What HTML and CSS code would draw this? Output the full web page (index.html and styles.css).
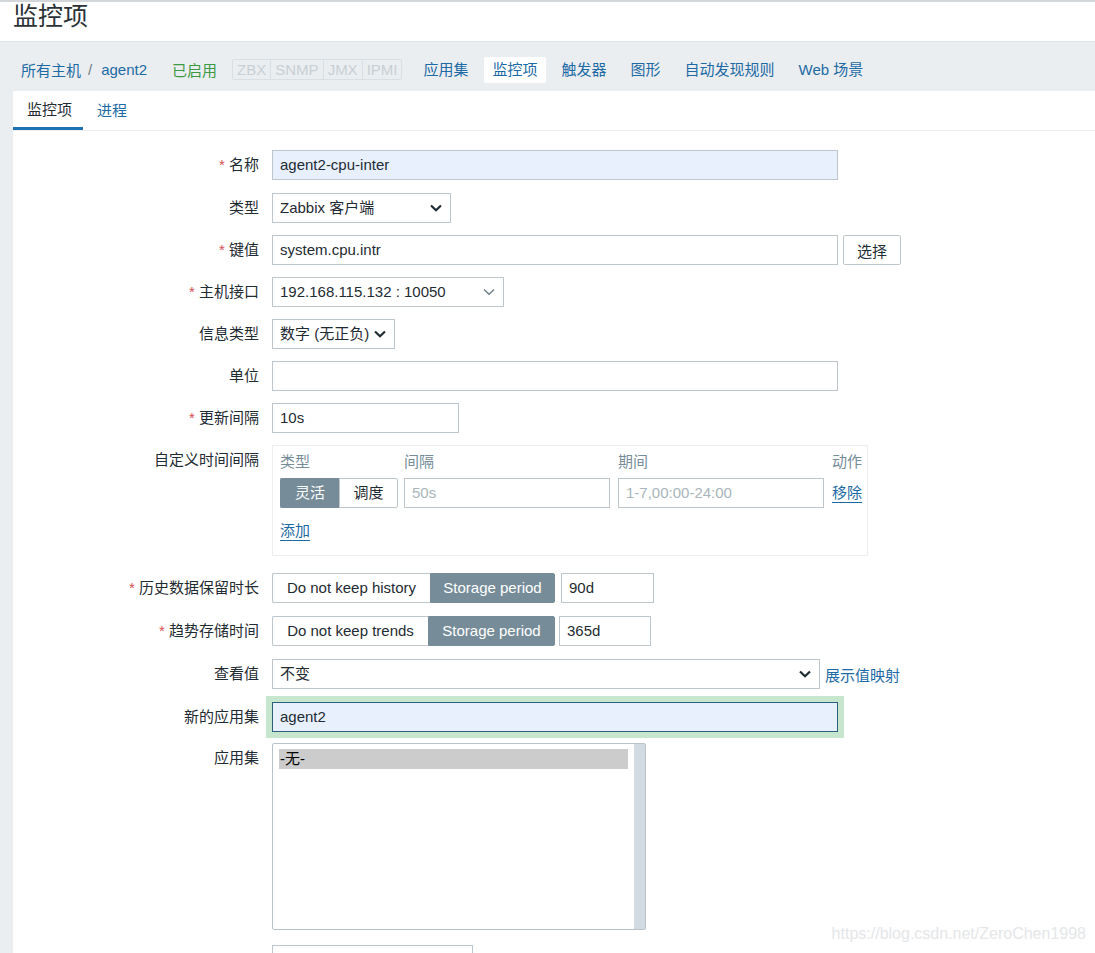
FILE: index.html
```html
<!DOCTYPE html>
<html lang="zh">
<head>
<meta charset="utf-8">
<title>监控项</title>
<link rel="stylesheet" href="styles.css">
</head>
<body>
<div class="topline"></div>
<header class="page-header"><h1 class="page-title">监控项</h1></header>
<nav class="host-bar">
  <ul class="breadcrumbs">
    <li><a class="link">所有主机</a></li>
    <li class="sep">/</li>
    <li><a class="link">agent2</a></li>
  </ul>
  <span class="status-on">已启用</span>
  <span class="avail"><span>ZBX</span><span>SNMP</span><span>JMX</span><span>IPMI</span></span>
  <ul class="host-nav">
    <li><a class="link">应用集</a></li>
    <li class="selected"><a class="link">监控项</a></li>
    <li><a class="link">触发器</a></li>
    <li><a class="link">图形</a></li>
    <li><a class="link">自动发现规则</a></li>
    <li><a class="link">Web 场景</a></li>
  </ul>
</nav>
<main class="panel">
  <div class="tabs">
    <span class="tab active">监控项</span>
    <span class="tab"><a class="link">进程</a></span>
  </div>
  <form class="form">
    <div class="row row-g13">
      <label class="lbl"><span class="req">*</span> 名称</label>
      <div class="field"><div class="input w566 autofill">agent2-cpu-inter</div></div>
    </div>
    <div class="row">
      <label class="lbl">类型</label>
      <div class="field"><div class="select w179"><span>Zabbix 客户端</span><svg class="chev" width="12" height="8" viewBox="0 0 12 8"><path d="M1 1.5 L6 6.3 L11 1.5" fill="none" stroke="#1f2c33" stroke-width="2.2"/></svg></div></div>
    </div>
    <div class="row">
      <label class="lbl"><span class="req">*</span> 键值</label>
      <div class="field"><div class="input w566">system.cpu.intr</div><button type="button" class="btn">选择</button></div>
    </div>
    <div class="row">
      <label class="lbl"><span class="req">*</span> 主机接口</label>
      <div class="field"><div class="select w232"><span>192.168.115.132 : 10050</span><svg class="chev" width="12" height="8" viewBox="0 0 12 8"><path d="M1 1.5 L6 6.3 L11 1.5" fill="none" stroke="#6f7d85" stroke-width="1.3"/></svg></div></div>
    </div>
    <div class="row">
      <label class="lbl">信息类型</label>
      <div class="field"><div class="select w123"><span>数字 (无正负)</span><svg class="chev" width="12" height="8" viewBox="0 0 12 8"><path d="M1 1.5 L6 6.3 L11 1.5" fill="none" stroke="#1f2c33" stroke-width="2.2"/></svg></div></div>
    </div>
    <div class="row">
      <label class="lbl">单位</label>
      <div class="field"><div class="input w566"></div></div>
    </div>
    <div class="row">
      <label class="lbl"><span class="req">*</span> 更新间隔</label>
      <div class="field"><div class="input w187">10s</div></div>
    </div>
    <div class="row row-custom">
      <label class="lbl">自定义时间间隔</label>
      <div class="field">
        <div class="interval-box">
          <div class="iv-grid">
            <span class="iv-head">类型</span>
            <span class="iv-head">间隔</span>
            <span class="iv-head">期间</span>
            <span class="iv-head">动作</span>
            <div class="seg seg-small"><span class="seg-btn on w59">灵活</span><span class="seg-btn w59">调度</span></div>
            <div class="input w206 placeholder">50s</div>
            <div class="input w206 placeholder">1-7,00:00-24:00</div>
            <a class="link ul">移除</a>
          </div>
          <a class="link ul add">添加</a>
        </div>
      </div>
    </div>
    <div class="row row-g13">
      <label class="lbl"><span class="req">*</span> 历史数据保留时长</label>
      <div class="field gap6"><div class="seg"><span class="seg-btn w158">Do not keep history</span><span class="seg-btn on w125">Storage period</span></div><div class="input w93">90d</div></div>
    </div>
    <div class="row row-g13">
      <label class="lbl"><span class="req">*</span> 趋势存储时间</label>
      <div class="field gap4"><div class="seg"><span class="seg-btn w156">Do not keep trends</span><span class="seg-btn on w127">Storage period</span></div><div class="input w92">365d</div></div>
    </div>
    <div class="row row-g13">
      <label class="lbl">查看值</label>
      <div class="field"><div class="select w548"><span>不变</span><svg class="chev" width="12" height="8" viewBox="0 0 12 8"><path d="M1 1.5 L6 6.3 L11 1.5" fill="none" stroke="#1f2c33" stroke-width="2.2"/></svg></div><a class="link map-link">展示值映射</a></div>
    </div>
    <div class="row row-g11">
      <label class="lbl">新的应用集</label>
      <div class="field"><div class="input w566 focused">agent2</div></div>
    </div>
    <div class="row row-g15">
      <label class="lbl">应用集</label>
      <div class="field">
        <div class="listbox">
          <div class="list-items"><div class="list-opt">-无-</div></div>
          <div class="list-track"></div>
        </div>
      </div>
    </div>
    <div class="row">
      <label class="lbl"></label>
      <div class="field"><div class="input w201"></div></div>
    </div>
  </form>
</main>
<div class="watermark">https://blog.csdn.net/ZeroChen1998</div>
</body>
</html>
```

FILE: styles.css
```css
html, body {
  margin: 0;
  padding: 0;
  height: 953px;
  overflow: hidden;
}
body {
  background: #ebeef0;
  font-family: "Liberation Sans", "Noto Sans CJK SC", sans-serif;
  font-size: 15px;
  color: #1f2c33;
  position: relative;
}
.topline {
  height: 2px;
  background: #d3d7da;
}
.page-header {
  background: #fff;
  height: 40px;
  border-bottom: 1px solid #dfe4e7;
  box-sizing: border-box;
  padding-left: 13px;
}
.page-title {
  margin: 0;
  font-weight: normal;
  font-size: 25px;
  line-height: 29px;
  color: #2b3237;
}
.host-bar {
  display: flex;
  align-items: center;
  height: 49px;
  box-sizing: border-box;
  padding: 14px 0 8px 21px;
  background: #ebeef0;
}
.breadcrumbs, .host-nav {
  list-style: none;
  margin: 0;
  padding: 0;
  display: flex;
  align-items: center;
}
.link {
  color: #1d6aa5;
  text-decoration: none;
  cursor: pointer;
}
.breadcrumbs .sep {
  color: #6f7d85;
  margin: 0 9px 0 7px;
}
.status-on {
  color: #3c9a45;
  margin-left: 25px;
}
.avail {
  display: flex;
  margin-left: 15px;
  border: 1px solid #d9dfe3;
  border-radius: 2px;
  height: 19px;
  line-height: 19px;
  color: #c8d0d5;
}
.avail span {
  padding: 0 4px;
  border-left: 1px solid #d9dfe3;
}
.avail span:first-child { border-left: none; }
.host-nav {
  margin-left: 13px;
  gap: 8px;
}
.host-nav li {
  padding: 0 8px;
  height: 26px;
  line-height: 26px;
}
.host-nav li.selected {
  background: #fff;
  border-radius: 2px;
}
.panel {
  margin-left: 13px;
  background: #fff;
  height: 900px;
}
.tabs {
  display: flex;
  height: 40px;
  box-sizing: border-box;
  border-bottom: 1px solid #ebeef0;
}
.tab {
  padding: 0 12px 0 14px;
  line-height: 39px;
  box-sizing: border-box;
}
.tab.active {
  color: #1f2c33;
  border-bottom: 3px solid #1c72b3;
  line-height: 38px;
  padding-right: 11px;
}
.form {
  padding-top: 19px;
}
.row {
  display: flex;
  align-items: flex-start;
  margin-bottom: 12px;
}
.row-custom { margin-bottom: 17px; }
.row-g13 { margin-bottom: 13px; }
.row-g11 { margin-bottom: 11px; }
.row-g15 { margin-bottom: 15px; }
.lbl {
  width: 246px;
  flex: none;
  text-align: right;
  line-height: 30px;
  color: #1f2c33;
}
.req { color: #d64e4e; }
.field {
  margin-left: 13px;
  display: flex;
  align-items: center;
  gap: 5px;
}
.field.gap6 { gap: 6px; }
.field.gap4 { gap: 4px; }
.input, .select {
  height: 30px;
  box-sizing: border-box;
  border: 1px solid #bcc6cc;
  background: #fff;
  padding: 0 7px;
  line-height: 28px;
  white-space: nowrap;
  color: #1f2c33;
}
.select {
  display: flex;
  align-items: center;
  justify-content: space-between;
  padding-right: 8px;
}
.chev { flex: none; }
.autofill { background: #e8f0fe; }
.placeholder { color: #a9b5bb; }
.focused {
  background: #e8f0fe;
  border-color: #2d5f7f;
  box-shadow: 0 0 0 6px #c7e6ce;
}
.w566 { width: 566px; }
.w179 { width: 179px; }
.w232 { width: 232px; }
.w123 { width: 123px; }
.w187 { width: 187px; }
.w206 { width: 206px; }
.w93 { width: 93px; }
.w92 { width: 92px; }
.w548 { width: 548px; }
.w201 { width: 201px; }
.w59 { width: 59px; }
.w158 { width: 158px; }
.w156 { width: 156px; }
.w125 { width: 125px; }
.w127 { width: 127px; }
.btn {
  height: 30px;
  width: 58px;
  border: 1px solid #bcc6cc;
  border-radius: 2px;
  background: #fff;
  font: inherit;
  color: #1f2c33;
  padding: 0;
}
.seg {
  display: flex;
  height: 30px;
}
.seg-btn {
  box-sizing: border-box;
  height: 30px;
  line-height: 28px;
  text-align: center;
  border: 1px solid #bcc6cc;
  background: #fff;
  color: #1f2c33;
  white-space: nowrap;
}
.seg-btn:first-child {
  border-radius: 2px 0 0 2px;
  border-right: none;
}
.seg-btn:last-child { border-radius: 0 2px 2px 0; }
.seg-btn.on {
  background: #768d99;
  border-color: #768d99;
  color: #fff;
}
.interval-box {
  width: 596px;
  height: 111px;
  box-sizing: border-box;
  border: 1px solid #ebeef0;
  padding: 6px 0 0 7px;
}
.iv-grid {
  display: grid;
  grid-template-columns: 124px 214px 214px 1fr;
  grid-template-rows: 20px 30px;
  row-gap: 6px;
  align-items: center;
  white-space: nowrap;
}
.iv-head {
  color: #768d99;
  line-height: 20px;
}
.ul {
  border-bottom: 1px solid #1d6aa5;
  line-height: 18px;
  justify-self: start;
}
.add {
  display: inline-block;
  margin-top: 14px;
}
.listbox {
  width: 374px;
  height: 187px;
  box-sizing: border-box;
  border: 1px solid #b9c3c9;
  border-radius: 2px;
  display: flex;
  background: #fff;
}
.list-items {
  flex: 1;
  padding: 5px 6px 0 6px;
}
.list-opt {
  background: #cccccc;
  height: 20px;
  line-height: 20px;
  color: #000;
  padding-left: 1px;
}
.list-track {
  width: 11px;
  background: #d1dbe1;
}
.watermark {
  position: absolute;
  right: 9px;
  top: 924px;
  color: #e4e6e8;
  font-size: 16px;
  line-height: 20px;
}
```
